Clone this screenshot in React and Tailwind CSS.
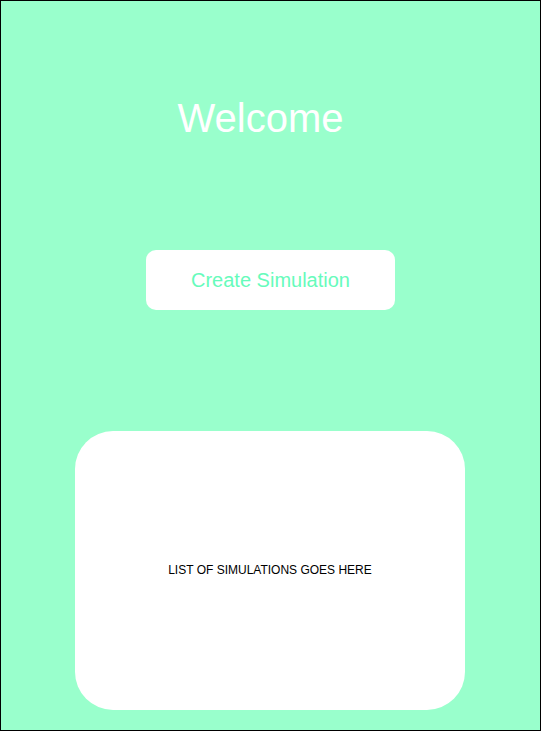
export default function App() {
  return (
    <div
      className="flex h-[731px] w-[541px] flex-col items-center border border-black bg-[#99ffcc]"
      style={{ fontFamily: '"Liberation Sans", Arial, sans-serif' }}
    >
      <h1 className="mr-[20px] mt-[97px] text-[40px] leading-[40px] text-white">Welcome</h1>

      <button
        type="button"
        className="mt-[112px] flex h-[60px] w-[249px] items-center justify-center rounded-[10px] bg-white text-[20px] text-[#66fbbb]"
      >
        Create Simulation
      </button>

      <div className="mr-[1px] mt-[121px] flex h-[279px] w-[390px] items-center justify-center rounded-[38px] bg-white pb-[2px]">
        <p className="text-[12px] text-black">LIST OF SIMULATIONS GOES HERE</p>
      </div>
    </div>
  )
}
